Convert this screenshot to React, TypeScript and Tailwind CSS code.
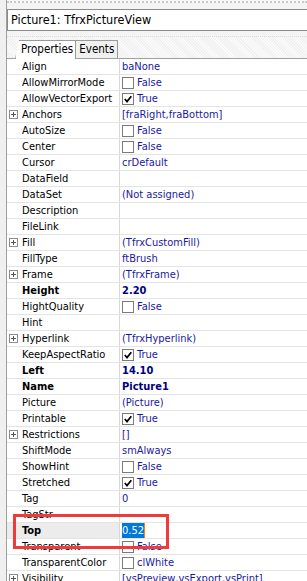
import React from "react";

type Row = {
  name: string;
  value?: string;
  check?: boolean;
  expand?: boolean;
  bold?: boolean;
  selected?: boolean;
};

const rows: Row[] = [
  { name: "Align", value: "baNone" },
  { name: "AllowMirrorMode", value: "False", check: false },
  { name: "AllowVectorExport", value: "True", check: true },
  { name: "Anchors", value: "[fraRight,fraBottom]", expand: true },
  { name: "AutoSize", value: "False", check: false },
  { name: "Center", value: "False", check: false },
  { name: "Cursor", value: "crDefault" },
  { name: "DataField" },
  { name: "DataSet", value: "(Not assigned)" },
  { name: "Description" },
  { name: "FileLink" },
  { name: "Fill", value: "(TfrxCustomFill)", expand: true },
  { name: "FillType", value: "ftBrush" },
  { name: "Frame", value: "(TfrxFrame)", expand: true },
  { name: "Height", value: "2.20", bold: true },
  { name: "HightQuality", value: "False", check: false },
  { name: "Hint" },
  { name: "Hyperlink", value: "(TfrxHyperlink)", expand: true },
  { name: "KeepAspectRatio", value: "True", check: true },
  { name: "Left", value: "14.10", bold: true },
  { name: "Name", value: "Picture1", bold: true },
  { name: "Picture", value: "(Picture)" },
  { name: "Printable", value: "True", check: true },
  { name: "Restrictions", value: "[]", expand: true },
  { name: "ShiftMode", value: "smAlways" },
  { name: "ShowHint", value: "False", check: false },
  { name: "Stretched", value: "True", check: true },
  { name: "Tag", value: "0" },
  { name: "TagStr" },
  { name: "Top", value: "0.52", bold: true, selected: true },
  { name: "Transparent", value: "False", check: false },
  { name: "TransparentColor", value: "clWhite", check: false },
  { name: "Visibility", value: "[vsPreview,vsExport,vsPrint]", expand: true },
];

function CheckBox({ on }: { on: boolean }) {
  return (
    <span className="mr-[3px] inline-flex h-[12px] w-[12px] shrink-0 items-center justify-center border border-[#7a7a7a] bg-white">
      {on && (
        <svg width="8" height="8" viewBox="0 0 8 8">
          <path d="M0.8 4 L3 6.5 L7.3 1.2" stroke="#000" strokeWidth="1.8" fill="none" />
        </svg>
      )}
    </span>
  );
}

function Plus() {
  return (
    <span className="absolute left-[2px] top-[3px] flex h-[9px] w-[9px] items-center justify-center border border-[#8c8c8c] bg-white">
      <svg width="7" height="7" viewBox="0 0 7 7">
        <path d="M1 3.5 H6 M3.5 1 V6" stroke="#555" strokeWidth="1" />
      </svg>
    </span>
  );
}

export default function App() {
  return (
    <div
      className="relative h-[581px] w-[307px] overflow-hidden bg-[#f4f4f4] text-[11px]"
      style={{ fontFamily: "'DejaVu Sans Condensed', 'DejaVu Sans', sans-serif", fontStretch: "semi-condensed" }}
    >
      {/* left side strip */}
      <div className="absolute left-0 top-0 h-full w-[7px] border-r border-[#a0a0a0] bg-[#f0f0f0]" />

      <div className="ml-[7px] flex h-full flex-col">
        {/* dotted drag bar */}
        <div className="h-[3px] shrink-0 border-b-2 border-dotted border-[#c9c9c9] bg-[#f7f7f7]" />
        <div className="h-[6px] shrink-0" />
        {/* combo */}
        <div className="flex h-[22px] shrink-0 items-center border border-r-0 border-[#8a8a8a] bg-white pl-[3px] text-[12.5px] text-black">
          Picture1: TfrxPictureView
        </div>
        <div className="h-[6px] shrink-0 border-b border-dotted border-[#dcdcdc]" />
        {/* tab strip */}
        <div className="flex h-[22px] shrink-0 items-end border-b border-[#a0a0a0] bg-[repeating-linear-gradient(45deg,#f1f1f1_0px,#f1f1f1_1px,#fafafa_1px,#fafafa_2px)] pl-[8px]">
          <div className="relative -mb-px flex h-[19px] items-center border border-b-0 border-[#999] bg-white pl-[5px] pr-[2px] text-[11.5px] [clip-path:polygon(4px_0,100%_0,100%_100%,0_100%)]">
            Properties
          </div>
          <div className="flex h-[18px] items-center border border-b-0 border-l-0 border-[#999] bg-[#f0f0f0] px-[3px] text-[11.5px]">
            Events
          </div>
        </div>

        {/* grid */}
        <div className="shrink-0 bg-white">
          {rows.map((r) => (
            <div key={r.name} className="flex h-[16px] border-b border-[#e4e4e4]">
              <div
                className={`relative w-[113px] shrink-0 border-r border-[#d8d8d8] pl-[15px] leading-[15px] text-black ${r.selected ? "bg-[#ececec]" : ""}`}
              >
                {r.expand && <Plus />}
                <span className={r.bold ? "font-bold" : ""}>{r.name}</span>
              </div>
              <div
                className={`flex flex-1 items-center pl-[2px] leading-[15px] ${r.bold ? "font-bold text-[#000080]" : "text-[#1a1aa0]"}`}
              >
                {r.check !== undefined && <CheckBox on={r.check} />}
                {r.selected ? (
                  <span className="border-r border-[#ff8000] bg-[#0078d7] font-normal text-white">{r.value}</span>
                ) : (
                  r.value
                )}
              </div>
            </div>
          ))}
        </div>
      </div>

      {/* red annotation box */}
      <div className="absolute left-[13px] top-[514px] h-[35px] w-[156px] border-[3px] border-[#ef3b3b]" />
    </div>
  );
}
